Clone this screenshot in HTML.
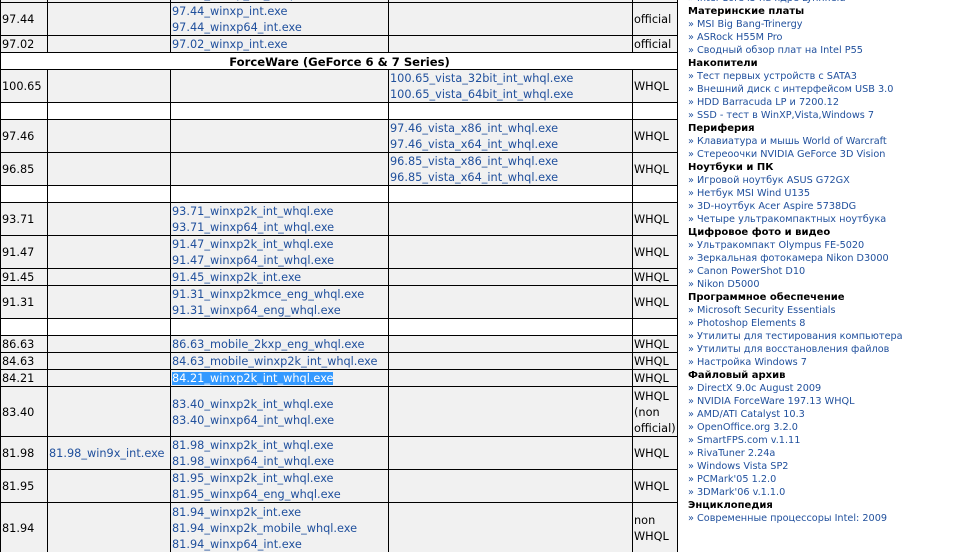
<!DOCTYPE html>
<html><head><meta charset="utf-8"><style>
*{margin:0;padding:0;box-sizing:border-box}
body{width:964px;height:550px;overflow:hidden;background:#fff;position:relative;font-family:"DejaVu Sans","Liberation Sans",sans-serif}
.r{position:absolute;left:0;width:678px;border-top:1px solid #000;border-left:1px solid #000;border-right:1px solid #000;display:flex;background:#f1f1f1}
.r.w{background:#fff}
.c{height:100%;border-right:1px solid #000;display:flex;flex-direction:column;justify-content:center;font-size:11.3px;line-height:16px;color:#000;padding-left:1px;padding-top:2px;white-space:nowrap;overflow:hidden}
.c:last-child{border-right:none}
.c1{width:47px}.c2{width:123px}.c3{width:218px}.c4{width:244px}.c5{width:43px;line-height:16px}
a{color:#1f4f9c;text-decoration:none}
.hl{background:#3399ff;color:#fff}
.h{justify-content:center;align-items:center;font-weight:bold;width:676px;font-size:11.6px}
#side{position:absolute;left:688px;top:-8px;font-size:9.7px;line-height:13px;color:#1f4f9c;white-space:nowrap}
#side b{color:#000;display:block;font-size:10px}
#side div:before{content:"» ";color:#1f4f9c}
</style></head><body>
<div class="r" style="top:-15px;height:17px"><div class="c c1"></div><div class="c c2"></div><div class="c c3"><a>97.50_winxp_int_whql.exe</a></div><div class="c c4"></div><div class="c c5"></div></div>
<div class="r" style="top:2px;height:33px"><div class="c c1">97.44</div><div class="c c2"></div><div class="c c3"><a>97.44_winxp_int.exe</a><a>97.44_winxp64_int.exe</a></div><div class="c c4"></div><div class="c c5">official</div></div>
<div class="r" style="top:35px;height:17px"><div class="c c1">97.02</div><div class="c c2"></div><div class="c c3"><a>97.02_winxp_int.exe</a></div><div class="c c4"></div><div class="c c5">official</div></div>
<div class="r w" style="top:52px;height:17px"><div class="c h">ForceWare (GeForce 6 &amp; 7 Series)</div></div>
<div class="r" style="top:69px;height:33px"><div class="c c1">100.65</div><div class="c c2"></div><div class="c c3"></div><div class="c c4"><a>100.65_vista_32bit_int_whql.exe</a><a>100.65_vista_64bit_int_whql.exe</a></div><div class="c c5">WHQL</div></div>
<div class="r w" style="top:102px;height:17px"><div class="c c1"></div><div class="c c2"></div><div class="c c3"></div><div class="c c4"></div><div class="c c5"></div></div>
<div class="r" style="top:119px;height:33px"><div class="c c1">97.46</div><div class="c c2"></div><div class="c c3"></div><div class="c c4"><a>97.46_vista_x86_int_whql.exe</a><a>97.46_vista_x64_int_whql.exe</a></div><div class="c c5">WHQL</div></div>
<div class="r" style="top:152px;height:33px"><div class="c c1">96.85</div><div class="c c2"></div><div class="c c3"></div><div class="c c4"><a>96.85_vista_x86_int_whql.exe</a><a>96.85_vista_x64_int_whql.exe</a></div><div class="c c5">WHQL</div></div>
<div class="r w" style="top:185px;height:17px"><div class="c c1"></div><div class="c c2"></div><div class="c c3"></div><div class="c c4"></div><div class="c c5"></div></div>
<div class="r" style="top:202px;height:33px"><div class="c c1">93.71</div><div class="c c2"></div><div class="c c3"><a>93.71_winxp2k_int_whql.exe</a><a>93.71_winxp64_int_whql.exe</a></div><div class="c c4"></div><div class="c c5">WHQL</div></div>
<div class="r" style="top:235px;height:33px"><div class="c c1">91.47</div><div class="c c2"></div><div class="c c3"><a>91.47_winxp2k_int_whql.exe</a><a>91.47_winxp64_int_whql.exe</a></div><div class="c c4"></div><div class="c c5">WHQL</div></div>
<div class="r" style="top:268px;height:17px"><div class="c c1">91.45</div><div class="c c2"></div><div class="c c3"><a>91.45_winxp2k_int.exe</a></div><div class="c c4"></div><div class="c c5">WHQL</div></div>
<div class="r" style="top:285px;height:33px"><div class="c c1">91.31</div><div class="c c2"></div><div class="c c3"><a>91.31_winxp2kmce_eng_whql.exe</a><a>91.31_winxp64_eng_whql.exe</a></div><div class="c c4"></div><div class="c c5">WHQL</div></div>
<div class="r w" style="top:318px;height:17px"><div class="c c1"></div><div class="c c2"></div><div class="c c3"></div><div class="c c4"></div><div class="c c5"></div></div>
<div class="r" style="top:335px;height:17px"><div class="c c1">86.63</div><div class="c c2"></div><div class="c c3"><a>86.63_mobile_2kxp_eng_whql.exe</a></div><div class="c c4"></div><div class="c c5">WHQL</div></div>
<div class="r" style="top:352px;height:17px"><div class="c c1">84.63</div><div class="c c2"></div><div class="c c3"><a>84.63_mobile_winxp2k_int_whql.exe</a></div><div class="c c4"></div><div class="c c5">WHQL</div></div>
<div class="r" style="top:369px;height:17px"><div class="c c1">84.21</div><div class="c c2"></div><div class="c c3"><span><a class="hl">84.21_winxp2k_int_whql.exe</a></span></div><div class="c c4"></div><div class="c c5">WHQL</div></div>
<div class="r" style="top:386px;height:50px"><div class="c c1">83.40</div><div class="c c2"></div><div class="c c3"><a>83.40_winxp2k_int_whql.exe</a><a>83.40_winxp64_int_whql.exe</a></div><div class="c c4"></div><div class="c c5">WHQL<br>(non<br>official)</div></div>
<div class="r" style="top:436px;height:33px"><div class="c c1">81.98</div><div class="c c2"><a>81.98_win9x_int.exe</a></div><div class="c c3"><a>81.98_winxp2k_int_whql.exe</a><a>81.98_winxp64_int_whql.exe</a></div><div class="c c4"></div><div class="c c5">WHQL</div></div>
<div class="r" style="top:469px;height:33px"><div class="c c1">81.95</div><div class="c c2"></div><div class="c c3"><a>81.95_winxp2k_int_whql.exe</a><a>81.95_winxp64_eng_whql.exe</a></div><div class="c c4"></div><div class="c c5">WHQL</div></div>
<div class="r" style="top:502px;height:50px"><div class="c c1">81.94</div><div class="c c2"></div><div class="c c3"><a>81.94_winxp2k_int.exe</a><a>81.94_winxp2k_mobile_whql.exe</a><a>81.94_winxp64_int.exe</a></div><div class="c c4"></div><div class="c c5">non<br>WHQL</div></div>

<div id="side">
<div>Intel Core i5 на ядре Lynnfield</div>
<b>Материнские платы</b>
<div>MSI Big Bang-Trinergy</div>
<div>ASRock H55M Pro</div>
<div>Сводный обзор плат на Intel P55</div>
<b>Накопители</b>
<div>Тест первых устройств с SATA3</div>
<div>Внешний диск с интерфейсом USB 3.0</div>
<div>HDD Barracuda LP и 7200.12</div>
<div>SSD - тест в WinXP,Vista,Windows 7</div>
<b>Периферия</b>
<div>Клавиатура и мышь World of Warcraft</div>
<div>Стереоочки NVIDIA GeForce 3D Vision</div>
<b>Ноутбуки и ПК</b>
<div>Игровой ноутбук ASUS G72GX</div>
<div>Нетбук MSI Wind U135</div>
<div>3D-ноутбук Acer Aspire 5738DG</div>
<div>Четыре ультракомпактных ноутбука</div>
<b>Цифровое фото и видео</b>
<div>Ультракомпакт Olympus FE-5020</div>
<div>Зеркальная фотокамера Nikon D3000</div>
<div>Canon PowerShot D10</div>
<div>Nikon D5000</div>
<b>Программное обеспечение</b>
<div>Microsoft Security Essentials</div>
<div>Photoshop Elements 8</div>
<div>Утилиты для тестирования компьютера</div>
<div>Утилиты для восстановления файлов</div>
<div>Настройка Windows 7</div>
<b>Файловый архив</b>
<div>DirectX 9.0c August 2009</div>
<div>NVIDIA ForceWare 197.13 WHQL</div>
<div>AMD/ATI Catalyst 10.3</div>
<div>OpenOffice.org 3.2.0</div>
<div>SmartFPS.com v.1.11</div>
<div>RivaTuner 2.24a</div>
<div>Windows Vista SP2</div>
<div>PCMark'05 1.2.0</div>
<div>3DMark'06 v.1.1.0</div>
<b>Энциклопедия</b>
<div>Современные процессоры Intel: 2009</div>
</div>
</body></html>
